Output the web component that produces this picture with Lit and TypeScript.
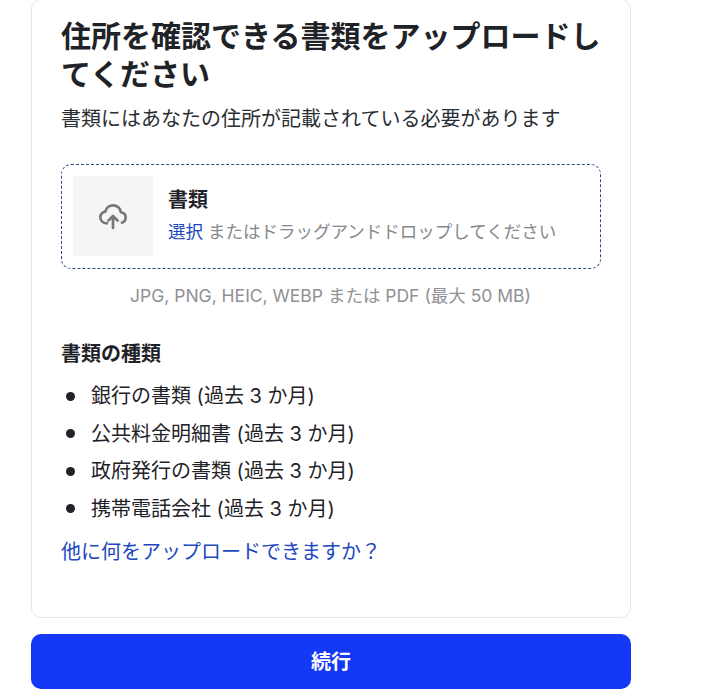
import { LitElement, html, css } from "lit";
import { customElement } from "lit/decorators.js";

@customElement("app-root")
export class AppRoot extends LitElement {
  static styles = css`
    :host {
      display: block;
      width: 720px;
      height: 697px;
      overflow: hidden;
      background: #fff;
      font-family: Inter, "Noto Sans CJK JP", sans-serif;
      color: #1f2328;
    }
    .wrap {
      width: 600px;
      margin-left: 31px;
      display: flex;
      flex-direction: column;
      gap: 16px;
    }
    .card {
      box-sizing: border-box;
      height: 619px;
      margin-top: -1px;
      padding: 17px 29px 0;
      border: 1px solid #e8e8e8;
      border-radius: 10px;
    }
    h1 {
      margin: 0;
      font-size: 30px;
      line-height: 38px;
      font-weight: 700;
    }
    .sub {
      margin: 12px 0 0;
      font-size: 20px;
      line-height: 28px;
      color: #2a2e33;
    }
    .drop {
      box-sizing: border-box;
      height: 105px;
      margin-top: 31px;
      padding: 11px;
      display: flex;
      align-items: flex-start;
      gap: 15px;
      border: 1px dashed #2f4a8a;
      border-radius: 10px;
    }
    .thumb {
      width: 80px;
      height: 80px;
      flex: none;
      display: flex;
      align-items: center;
      justify-content: center;
      background: #f5f5f5;
      border-radius: 4px;
    }
    .thumb svg {
      width: 32px;
      height: 32px;
    }
    .text {
      padding-top: 11px;
    }
    .dtitle {
      font-size: 20px;
      line-height: 26px;
      font-weight: 700;
    }
    .dsub {
      margin-top: 6px;
      font-size: 17.5px;
      line-height: 26px;
      color: #85888c;
    }
    .dsub a {
      color: #2148c0;
    }
    .formats {
      margin-top: 14px;
      margin-left: -1px;
      text-align: center;
      font-size: 17.5px;
      line-height: 26px;
      color: #8f9194;
    }
    h2 {
      margin: 31px 0 0;
      font-size: 20px;
      line-height: 28px;
      font-weight: 700;
    }
    ul {
      margin: 14px 0 0;
      padding: 0;
      list-style: none;
      font-size: 20px;
    }
    li {
      display: flex;
      align-items: center;
      gap: 16px;
      padding-left: 5px;
      line-height: 28px;
      margin-bottom: 9.5px;
    }
    li::before {
      content: "";
      width: 9px;
      height: 9px;
      flex: none;
      border-radius: 50%;
      background: #1f2328;
    }
    .more {
      display: block;
      margin-top: 15px;
      font-size: 20px;
      line-height: 28px;
      color: #2148c0;
    }
    button {
      height: 55px;
      padding: 0 0 3px;
      border: none;
      border-radius: 10px;
      background: #1438f5;
      color: #fff;
      font: inherit;
      font-size: 20px;
      font-weight: 700;
    }
  `;

  render() {
    const items = [
      "銀行の書類 (過去 3 か月)",
      "公共料金明細書 (過去 3 か月)",
      "政府発行の書類 (過去 3 か月)",
      "携帯電話会社 (過去 3 か月)",
    ];
    return html`
      <div class="wrap">
        <section class="card">
          <h1>住所を確認できる書類をアップロードしてください</h1>
          <p class="sub">書類にはあなたの住所が記載されている必要があります</p>
          <div class="drop">
            <div class="thumb">
              <svg viewBox="0 0 24 24" fill="none" stroke="#777" stroke-width="2" stroke-linecap="round" stroke-linejoin="round">
                <path d="M7.5 17.5C4.5 17.5 2.5 15.5 2.5 13C2.5 10.7 4.2 9 6.2 8.7C6.9 5.9 9.3 4 12 4C15.1 4 17.6 6.3 17.9 9.2C20 9.5 21.5 11.1 21.5 13.2C21.5 15 20.4 16.5 18.7 17" />
                <path d="M12 21V12.5M8.5 15.5L12 12L15.5 15.5" />
              </svg>
            </div>
            <div class="text">
              <div class="dtitle">書類</div>
              <div class="dsub"><a>選択</a> またはドラッグアンドドロップしてください</div>
            </div>
          </div>
          <div class="formats">JPG, PNG, HEIC, WEBP または PDF (最大 50 MB)</div>
          <h2>書類の種類</h2>
          <ul>${items.map((i) => html`<li>${i}</li>`)}</ul>
          <a class="more">他に何をアップロードできますか？</a>
        </section>
        <button>続行</button>
      </div>
    `;
  }
}
